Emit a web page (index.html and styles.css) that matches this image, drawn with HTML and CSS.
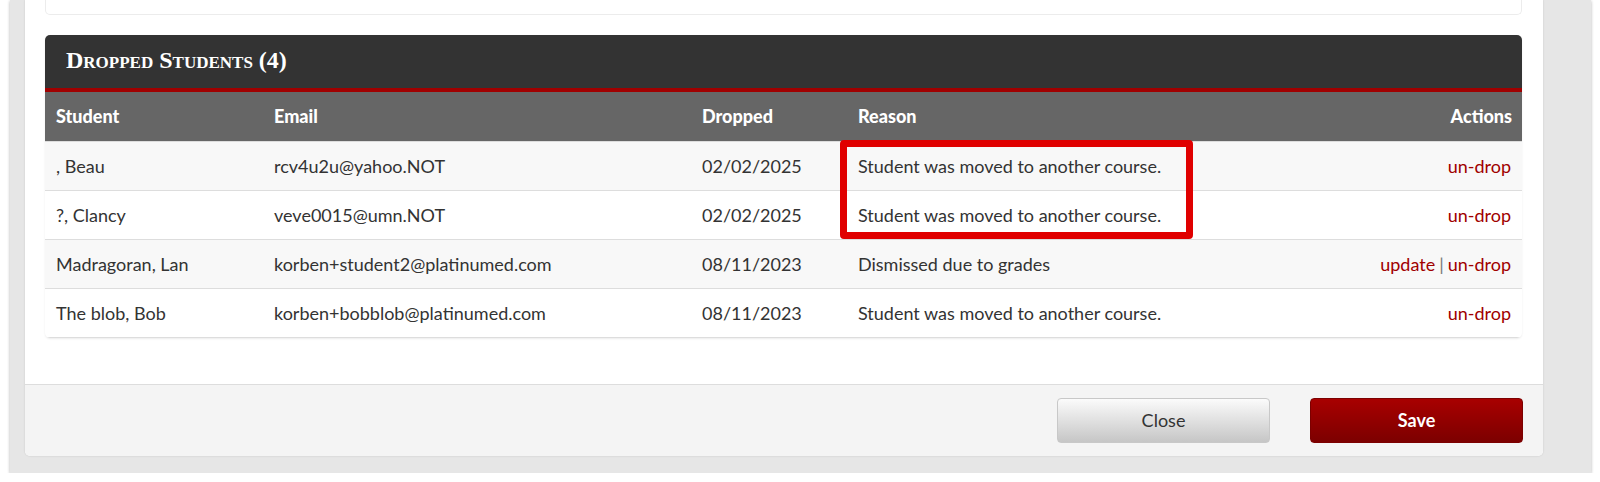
FILE: index.html
```html
<!DOCTYPE html>
<html lang="en">
  <head>
    <meta charset="UTF-8" />
    <meta name="viewport" content="width=device-width, initial-scale=1.0" />
    <title>Dropped Students</title>
    <link rel="stylesheet" href="styles.css">
  </head>
  <body>
    <div class="frame">
      <div class="modal">
        <div class="modal-body">
          <div class="prev-card"></div>

          <div class="panel">
            <h2 class="panel-title">Dropped Students (4)</h2>

            <table class="dropped">
              <thead>
                <tr>
                  <th class="col-student">Student</th>
                  <th class="col-email">Email</th>
                  <th class="col-dropped">Dropped</th>
                  <th class="col-reason">Reason</th>
                  <th class="col-actions">Actions</th>
                </tr>
              </thead>
              <tbody>
                <tr>
                  <td>, Beau</td>
                  <td>rcv4u2u@yahoo.NOT</td>
                  <td>02/02/2025</td>
                  <td>Student was moved to another course.</td>
                  <td class="actions"><a href="#">un-drop</a></td>
                </tr>
                <tr>
                  <td>?, Clancy</td>
                  <td>veve0015@umn.NOT</td>
                  <td>02/02/2025</td>
                  <td>Student was moved to another course.</td>
                  <td class="actions"><a href="#">un-drop</a></td>
                </tr>
                <tr>
                  <td>Madragoran, Lan</td>
                  <td>korben+student2@platinumed.com</td>
                  <td>08/11/2023</td>
                  <td>Dismissed due to grades</td>
                  <td class="actions"><a href="#">update</a><span class="sep">|</span><a href="#">un-drop</a></td>
                </tr>
                <tr>
                  <td>The blob, Bob</td>
                  <td>korben+bobblob@platinumed.com</td>
                  <td>08/11/2023</td>
                  <td>Student was moved to another course.</td>
                  <td class="actions"><a href="#">un-drop</a></td>
                </tr>
              </tbody>
            </table>

            <!-- highlight drawn over the reason cells -->
            <div class="callout"></div>
          </div>
        </div>

        <div class="modal-footer">
          <button class="btn btn-close">Close</button>
          <button class="btn btn-save">Save</button>
        </div>
      </div>
    </div>
  </body>
</html>
```

FILE: styles.css
```css
body {
  margin: 0;
  background-color: white;
  font-family: Lato, "Liberation Sans", Arial, sans-serif;
  color: #333;
}
.frame {
  margin: 0 9px 0 10px;
  padding: 0 48px 17px 15px;
  background-color: #e6e6e6;
  box-shadow: 0 1px 3px rgba(0, 0, 0, 0.3);
}
.modal {
  background-color: white;
  border-radius: 0 0 5px 5px;
  box-shadow: 0 0 2px rgba(0, 0, 0, 0.15);
  overflow: hidden;
}
.modal-body {
  padding: 0 21px 46px 20px;
}
.prev-card {
  height: 14px;
  border: 1px solid #ececec;
  border-top: none;
  border-radius: 0 0 5px 5px;
}
.panel {
  position: relative;
  margin-top: 20px;
  border-radius: 5px;
  box-shadow: 0 1px 2px rgba(0, 0, 0, 0.08);
  overflow: hidden;
}
.panel-title {
  margin: 0;
  height: 53px;
  line-height: 50px;
  padding-left: 21px;
  background-color: #333;
  border-bottom: 4px solid #a00000;
  color: white;
  font-family: "Liberation Serif", "Times New Roman", serif;
  font-variant: small-caps;
  font-size: 24px;
  font-weight: bold;
}
.dropped {
  width: 100%;
  border-collapse: collapse;
  table-layout: fixed;
  font-size: 18px;
}
.dropped th {
  box-sizing: border-box;
  height: 49px;
  padding: 0 11px;
  background-color: #666;
  border-bottom: 1px solid #ddd;
  color: white;
  font-weight: 900;
  text-align: left;
}
.dropped td {
  height: 48px;
  padding: 0 11px;
  border-bottom: 1px solid #ddd;
  white-space: nowrap;
}
.dropped tbody tr:nth-child(odd) {
  background-color: #f8f8f8;
}
.col-student {
  width: 218px;
}
.col-email {
  width: 428px;
}
.col-dropped {
  width: 156px;
}
.col-reason {
  width: 400px;
}
.dropped th.col-actions,
.actions {
  text-align: right;
  padding-right: 10px;
}
.actions a {
  color: #a00000;
  text-decoration: none;
}
.sep {
  color: #777;
  margin: 0 4px;
}
.callout {
  position: absolute;
  left: 795px;
  top: 105px;
  width: 353px;
  height: 99px;
  box-sizing: border-box;
  border: 7px solid #e00000;
  border-radius: 4px;
}
.modal-footer {
  display: flex;
  justify-content: flex-end;
  gap: 40px;
  padding: 13px 20px;
  background-color: #f4f4f4;
  border-top: 1px solid #ddd;
}
.btn {
  width: 213px;
  height: 45px;
  border-radius: 4px;
  font-family: Lato, "Liberation Sans", Arial, sans-serif;
  font-size: 18px;
  cursor: pointer;
}
.btn-close {
  color: #333;
  background: linear-gradient(#fbfbfb, #c6c6c6);
  border: 1px solid #c8c8c8;
}
.btn-save {
  color: white;
  font-weight: bold;
  background: linear-gradient(#a80000, #7c0000);
  border: 1px solid #7c0000;
}
```
